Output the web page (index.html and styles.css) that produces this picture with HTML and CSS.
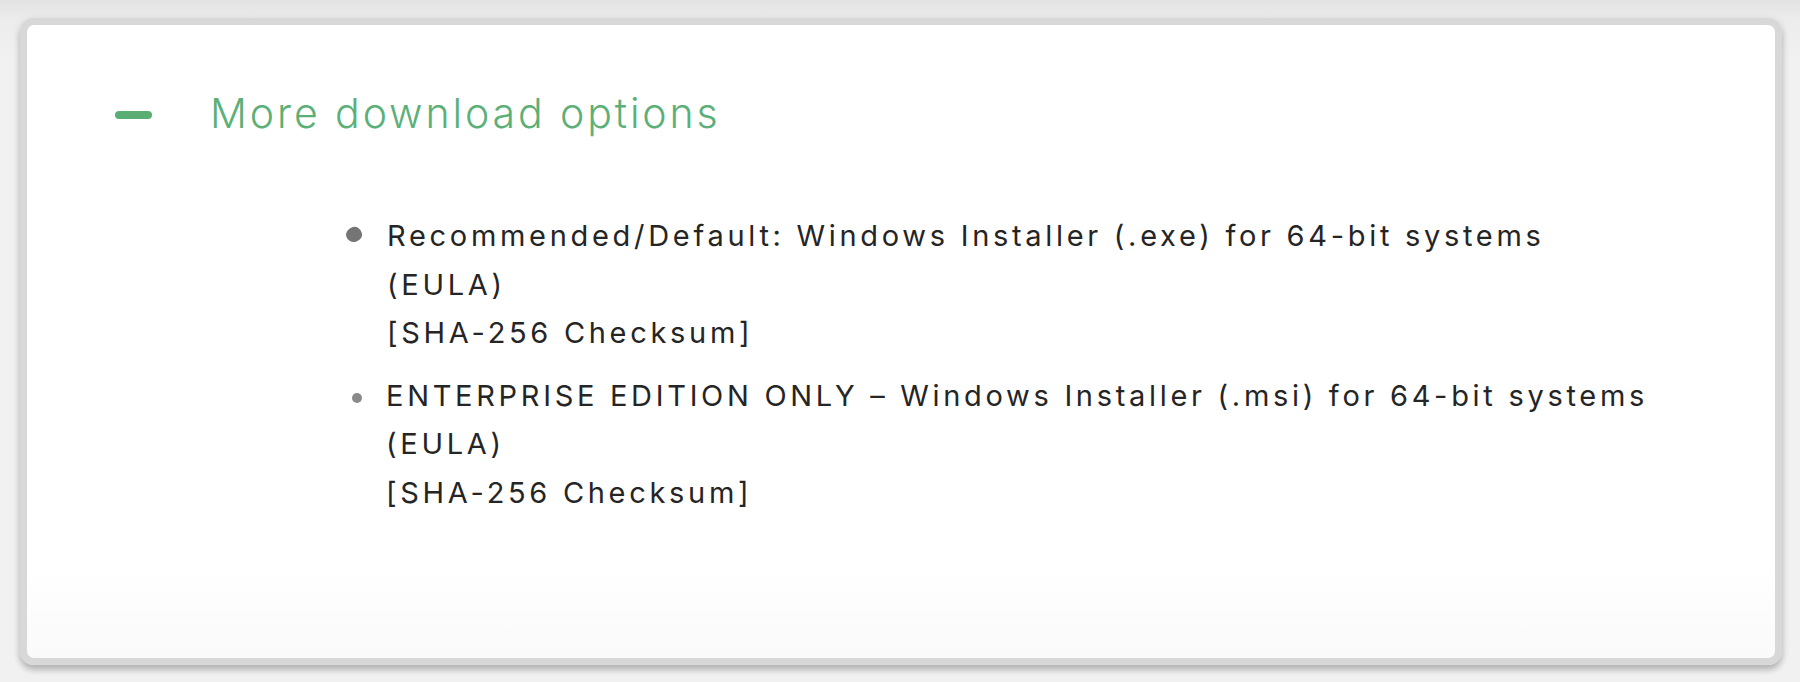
FILE: index.html
```html
<!DOCTYPE html>
<html lang="en">
<head>
<meta charset="utf-8">
<title>More download options</title>
<link rel="stylesheet" href="styles.css">
</head>
<body>
<div class="page">
  <section class="card">
    <div class="header">
      <span class="minus" aria-hidden="true"></span>
      <h2 class="title">More download options</h2>
    </div>
    <ul class="list">
      <li class="item">
        <span class="dot dot-blob"></span>
        <div class="text">
          <span class="line">Recommended/Default: Windows Installer (.exe) for 64-bit systems</span>
          <span class="line">(EULA)</span>
          <span class="line">[SHA-256 Checksum]</span>
        </div>
      </li>
      <li class="item">
        <span class="dot"></span>
        <div class="text">
          <span class="line">ENTERPRISE EDITION ONLY – Windows Installer (.msi) for 64-bit systems</span>
          <span class="line">(EULA)</span>
          <span class="line">[SHA-256 Checksum]</span>
        </div>
      </li>
    </ul>
  </section>
</div>
</body>
</html>
```

FILE: styles.css
```css
* { box-sizing: border-box; }
html, body { margin: 0; padding: 0; }
body {
  width: 1800px;
  height: 682px;
  overflow: hidden;
  background: linear-gradient(to bottom, #e2e2e2 0px, #ececec 18px, #f1f1f1 60px, #f1f1f1 100%);
  font-family: "Inter", "Liberation Sans", sans-serif;
}
.page {
  padding: 18px 18px 0 20px;
}
.card {
  width: 1762px;
  height: 647px;
  border: 7px solid #d8d8d8;
  border-radius: 14px;
  background: linear-gradient(to bottom, #ffffff 0, #ffffff 540px, #fafafa 100%);
  box-shadow: 0 5px 6px rgba(0, 0, 0, 0.22), 0 1px 10px rgba(0, 0, 0, 0.08);
  padding: 63px 0 0 88px;
}
.header {
  display: flex;
  align-items: center;
  height: 50px;
}
.minus {
  flex: none;
  width: 37px;
  height: 8px;
  border-radius: 4px;
  background: #5aae74;
  margin-right: 58px;
  margin-top: 4px;
}
.title {
  margin: 0;
  font-size: 41px;
  line-height: 50px;
  font-weight: 350;
  letter-spacing: 2.9px;
  color: #5bb077;
  white-space: nowrap;
}
.list {
  list-style: none;
  margin: 74px 0 0 0;
  padding: 0 0 0 231px;
}
.item {
  display: flex;
  align-items: flex-start;
  margin-bottom: 14px;
}
.dot {
  flex: none;
  width: 10px;
  height: 10px;
  border-radius: 50%;
  background: #8a8a8a;
  margin: 21px 24px 0 6px;
}
.dot-blob {
  width: 16px;
  height: 15px;
  border-radius: 55% 45% 50% 50% / 50% 55% 45% 50%;
  background: #757575;
  margin: 15px 25px 0 0;
  transform: rotate(-15deg);
}
.text {
  display: flex;
  flex-direction: column;
  font-size: 29px;
  line-height: 48.5px;
  letter-spacing: 3.7px;
  color: #252525;
}
.line {
  white-space: nowrap;
}
```
